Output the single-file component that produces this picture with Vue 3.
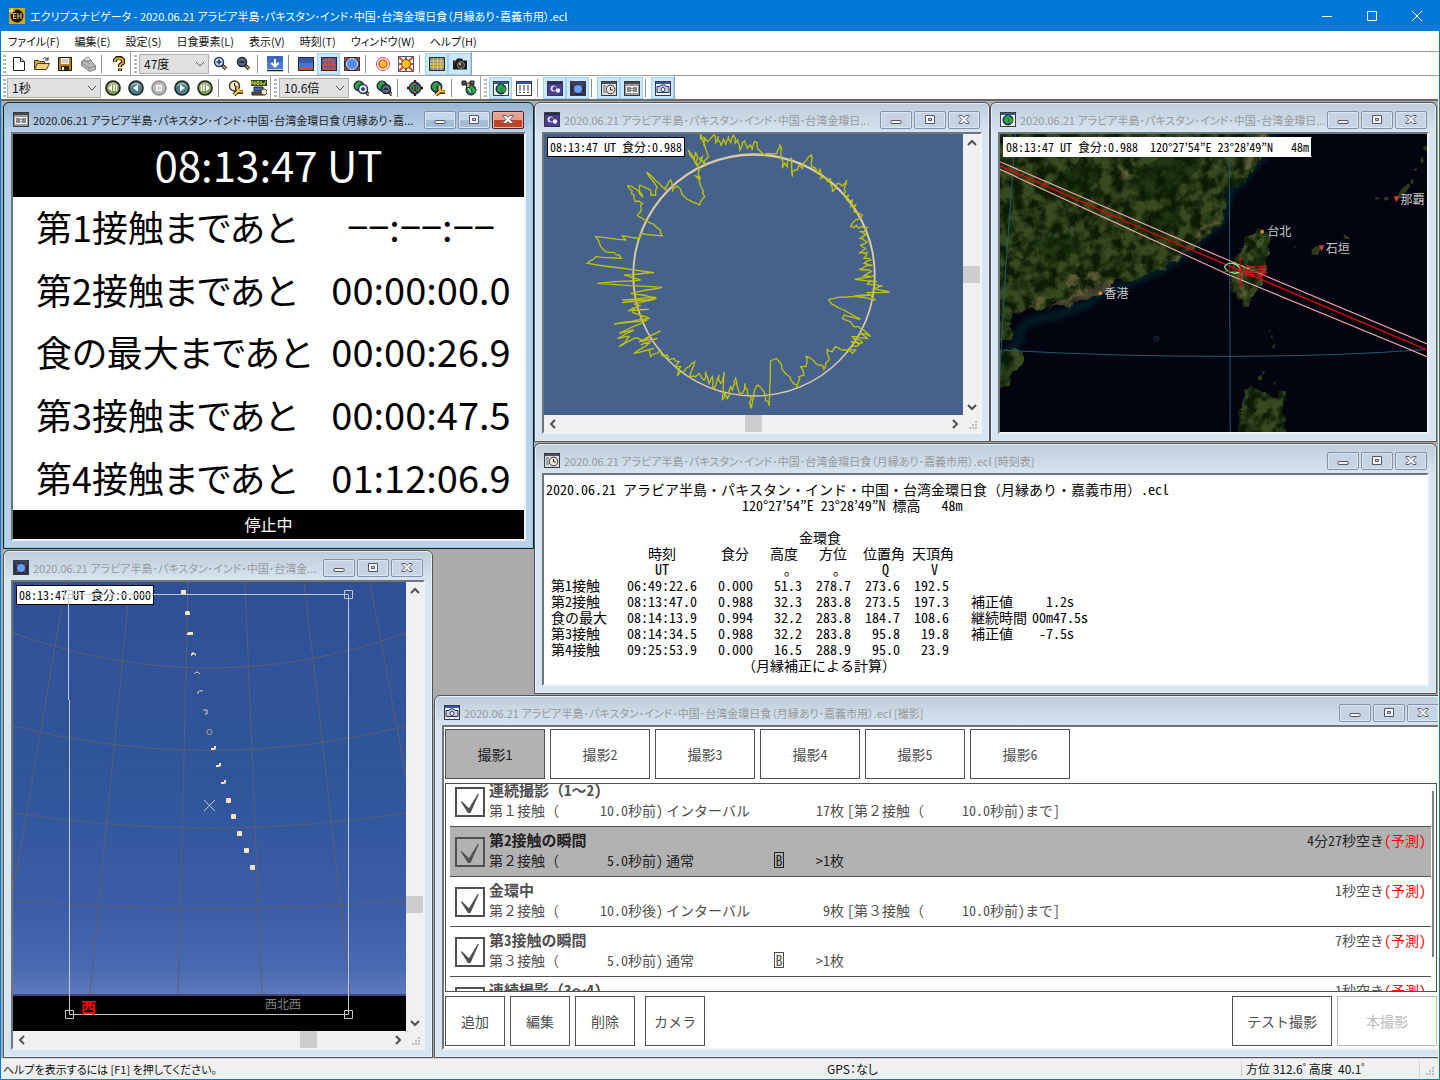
<script setup>
import { ref } from 'vue'

const globe = (x, y, r) =>
  `<circle cx="${x}" cy="${y}" r="${r}" fill="#1d3f86" stroke="#0c1a24"/><path d="M${x - r + 1} ${y - 1}l2-3 3-1 1 2-2 3 1 3-2 1-3-3z" fill="#2fa23a"/><path d="M${x + 1} ${y - 3}l3 1 1 3-2 3-2-2z" fill="#2fa23a"/>`
const frame = (inner, bg = '#fff', bar = '#2f5bb0') =>
  `<rect x=".5" y="1.5" width="15" height="14" fill="${bg}" stroke="#3a3a3a"/><path d="M1 3h14" stroke="${bar}" stroke-width="2"/>${inner}`
const orb = (fill, inner) =>
  `<circle cx="8" cy="8" r="7" fill="${fill}" stroke="#1c2418" stroke-width="1.6"/><path d="M3.500 6a5 4 0 0 1 9 0" stroke="#fff" stroke-opacity=".7" fill="none"/>${inner}`
const lens = (x, y, sign, glass, dark) =>
  `<path d="M${x + 3} ${y + 3}l4 4" stroke="#20242c" stroke-width="3.400"/><path d="M${x + 4} ${y + 4}l3 3" stroke="#d2a048" stroke-width="1.600"/><circle cx="${x}" cy="${y}" r="4.500" fill="${glass}" stroke="${dark}" stroke-width="1.500"/><path d="${sign}" stroke="${dark}" stroke-width="1.600"/>`
const wrench =
  '<path d="M6 15l5-5M9 6v4l2 2h4" stroke="#3c2c08" stroke-width="4" fill="none"/><path d="M6 15l5-5M9.500 6v3.500l2 2h4" stroke="#eabf50" stroke-width="2.200" fill="none"/>'

const icons = {
  app: '<rect width="16" height="16" fill="#d9a414"/><circle cx="8" cy="8" r="6.500" fill="#171208"/><path d="M7.500 5.500h-3v5h3M4.500 8h3M9 5v6M12 5v6M9 8h3" stroke="#e9c95c" fill="none"/><path d="M3 0v6M0 3h6" stroke="#fff8c8"/>',
  fresh: '<path d="M2.500 1.500h7l4 4v9h-11z" fill="#fff" stroke="#222"/><path d="M9.500 1.500v4h4" fill="#ddd" stroke="#222"/>',
  open: '<path d="M.5 13.500v-9h4l1 1h5v2" fill="#d9a441" stroke="#4c3a1a"/><path d="M.5 13.500l3-6h12l-3 6z" fill="#f7cf7c" stroke="#4c3a1a"/><path d="M9 3c2-2 4-1 5 1m0-3v3h-3" fill="none" stroke="#222"/>',
  save: '<path d="M1.500 1.500h13v13h-13z" fill="#b5821e" stroke="#1c1812"/><path d="M4 2h8v6H4z" fill="#f6f2e6"/><path d="M4 10h8v4H4z" fill="#282420"/><path d="M5 11h2v3H5z" fill="#fff"/><path d="M5 4h6M5 6h6" stroke="#aaa"/>',
  print: '<path d="M2 5l6-4 4 4" fill="#e4e4e4" stroke="#8c8c8c"/><path d="M1.500 5.500l9-1 5 5v4l-6 2-8-6z" fill="#b9b9b9" stroke="#858585"/><path d="M2 7l7 5 6-2M4 4l6 4M9 12v3" stroke="#878787" fill="none"/>',
  help: '<path d="M4 6V4l2-2h4l2 2v3l-3 2v2M9 12.500v2.500" stroke="#241a04" stroke-width="4" fill="none"/><path d="M4 6V4l2-1.500h4l2 1.500v3l-3 2v2M9 13v1.500" stroke="#e6ae24" stroke-width="1.800" fill="none"/>',
  zoomIn: lens(6, 6, 'M3.500 6h5M6 3.500v5', '#cfe0fa', '#26365c'),
  zoomOut: lens(6, 6, 'M3.500 6h5', '#5c677c', '#20283a'),
  down: '<rect width="16" height="13" fill="#4a7ed0"/><rect width="16" height="6" fill="#3c68bc"/><path d="M0 14.500h16" stroke="#222" stroke-width="1.500"/><path d="M8 3v7M4.500 7L8 10.500 11.500 7" stroke="#fff" stroke-width="2" fill="none"/>',
  horizon: '<rect x=".5" y="1.500" width="15" height="13" fill="#4a75c8" stroke="#252a38"/><path d="M1 2h14v5H1z" fill="#345cae"/><path d="M1 13h14" stroke="#e84620" stroke-width="2"/>',
  warp: '<rect x=".5" y="1.500" width="15" height="13" fill="#3e62ae" stroke="#252a38"/><path d="M1 13h14M1 9q7-2 14 0M2 5q6-3 12 0M8 2v12M5 3q-2 5-3 11M11 3q2 5 3 11M5 2v12M11 2v12" stroke="#f04a28" fill="none"/>',
  fisheye: '<rect x=".5" y="1.500" width="15" height="13" fill="#394a68" stroke="#252a38"/><circle cx="8" cy="8" r="5.500" fill="#5b8ae0" stroke="#dbe4f4"/><path d="M1 5V2h3M12 2h3v3M15 11v3h-3M4 14H1v-3" stroke="#e84620" fill="none"/>',
  sun: '<circle cx="8" cy="8" r="6.500" fill="#fff" stroke="#e03c3c"/><circle cx="8" cy="8" r="4" fill="#ffc21c" stroke="#e4502c" stroke-width="1.500"/><path d="M6 6l2-1" stroke="#fff"/>',
  rays: '<rect x=".5" y=".5" width="15" height="15" fill="#fff" stroke="#3a5a8a"/><path d="M1 1l14 14M15 1L1 15M8 1v14M1 8h14" stroke="#e44830" stroke-width="2"/><circle cx="8" cy="8" r="4.500" fill="#ffc21c" stroke="#6a3810"/>',
  grid: '<rect x=".5" y="1.500" width="15" height="13" fill="#6088d0" stroke="#262c3a"/><path d="M1 5h14M1 8h14M1 11h14M4.500 2v12M8.500 2v12M12 2v12" stroke="#f0c030" stroke-width="1.400"/>',
  camera: '<path d="M1 4.500h3l1-2h5l1 2h4v9H1z" fill="#1d1c1a"/><circle cx="9" cy="9" r="3.500" fill="#3d3a34" stroke="#8a8478"/><circle cx="8" cy="8" r="1" fill="#ddd"/><path d="M2 6h2" stroke="#a05030"/>',
  rewind: orb('#7f9a52', '<path d="M7 4.500v7L3 8z" fill="#fff"/><path d="M9 5v6M11.500 5v6" stroke="#fff" stroke-width="1.500"/>'),
  back: orb('#4d7d8c', '<path d="M10 4.500v7L5 8z" fill="#fff"/>'),
  stop: '<circle cx="8" cy="8" r="7" fill="#bdb9b9" stroke="#8f8c8c" stroke-width="1.600"/><rect x="5.500" y="5.500" width="5" height="5" fill="#d9d6d6" stroke="#fff"/>',
  play: orb('#4d7d8c', '<path d="M6 4.500v7L11 8z" fill="#fff"/>'),
  forward: orb('#7f9a52', '<path d="M9 4.500v7L13 8z" fill="#fff"/><path d="M4.500 5v6M7 5v6" stroke="#fff" stroke-width="1.500"/>'),
  clockSet: '<circle cx="6.500" cy="6" r="5" fill="#f6eedc" stroke="#4c3614" stroke-width="1.500"/><path d="M6.500 3v3h2" stroke="#333" fill="none"/>' + wrench,
  now: '<path d="M0 0h16v6H0z" fill="#30421c"/><path d="M1 5V1l3 4V1M6 1.500h2v3H6zM10 1v4l1.500-2L13 5l2-4" stroke="#cfe63c" fill="none"/><path d="M3 7h9v4H3z" fill="#3c68bc" stroke="#222"/><path d="M1 12h13v3H1z" fill="#555" stroke="#222"/><circle cx="13" cy="12" r="3" fill="#f4ead0" stroke="#5c4418"/>',
  globeIn: globe(6, 6, 5) + lens(10, 9, 'M8 9h4M10 7v4', '#dfeafa', '#26365c'),
  globeOut: globe(6, 6, 5) + lens(10, 9, 'M8 9h4', '#5c677c', '#20283a'),
  target: globe(8, 8, 6) + '<path d="M8 0v6M8 10v6M0 8h6M10 8h6" stroke="#222" stroke-width="2.400"/><path d="M8 3v2M8 11v2M3 8h2M11 8h2" stroke="#f04a3c" stroke-width="2"/>',
  globeSet: globe(6.5, 7, 5.5) + wrench,
  satellite: globe(10, 10, 5) + '<path d="M1 1h4v4H1zM9 1h4v4H9z" fill="#50555c" stroke="#222"/><path d="M5 3h4v4l-3 1z" fill="#d2ae5a" stroke="#222"/><path d="M7 8l3 4" stroke="#eee"/>',
  map: frame(globe(8, 9, 5), '#f4f4f4'),
  table: frame('<path d="M3 6h2M7 6h2M11 6h2M3 8h2M7 8h2M11 8h2M3 10h2M7 10h2M11 10h2M3 12.500h2M7 12.500h2M11 12.500h2" stroke="#333"/>'),
  limb: frame('<circle cx="6.500" cy="8.500" r="3" fill="#ddd"/><circle cx="7.500" cy="8.500" r="2" fill="#4a3c96"/><circle cx="11" cy="10.500" r="2.200" fill="#f0f0f0"/>', '#4a3c96', '#282c50'),
  sky: frame('<rect x="2" y="4" width="12" height="10" fill="#28304a"/><circle cx="8" cy="9" r="4" fill="#64a0ff"/><path d="M3 5l2 1M13 5l-2 1M3 13l2-1M13 13l-2-1" stroke="#d04828"/>', '#28304a', '#32467c'),
  schedule: frame('<path d="M2 6h3M2 8h2M2 10h2M2 12h3" stroke="#666"/><circle cx="9.500" cy="9.500" r="4.300" fill="#f2e6d6" stroke="#333"/><path d="M9.500 7v3h2.500" stroke="#333" fill="none"/>', '#dcdce0', '#4a5062'),
  digital: frame('<path d="M2 6h12v7H2z" fill="#efefef"/><path d="M4 7v5M6 7v5M8 8v1M8 10v1M10 7v5M12 7v5" stroke="#222"/>', '#9a9a9a', '#4a4a4a'),
  shoot: frame('<path d="M2 6.500h3l1-1.500h4l1 1.500h3v6H2z" fill="#c6cede" stroke="#2a3658"/><circle cx="8" cy="9.500" r="2" fill="#fff" stroke="#2a3658"/>', '#eef2fa')
}

const menus = ['ファイル(F)', '編集(E)', '設定(S)', '日食要素(L)', '表示(V)', '時刻(T)', 'ウィンドウ(W)', 'ヘルプ(H)']

const toolbars = [
  [
    ['fresh', 'open', 'save', 'print', '|', 'help'],
    [{ label: '視野角', value: '47度', size: 'narrow' }, 'zoomIn', 'zoomOut', '|', 'down', '|', 'horizon', '*warp', 'fisheye', '|', 'sun', 'rays', '|', '*grid', '*camera']
  ],
  [
    [{ label: '時間間隔', value: '1秒', size: 'wide' }, 'rewind', 'back', 'stop', 'play', 'forward', '|', 'clockSet', 'now'],
    [{ label: '倍率', value: '10.6倍', size: 'narrow' }, 'globeIn', 'globeOut', '|', 'target', 'globeSet', '|', 'satellite'],
    ['*map', 'table', '|', '*limb', '*sky', '|', '*schedule', '*digital', '|', '*shoot']
  ]
]
const iconOf = (t) => t.replace('*', '')

const windows = [
  { id: 'clock', icon: 'digital', active: true, title: '2020.06.21 アラビア半島･パキスタン･インド･中国･台湾金環日食（月縁あり･嘉...' },
  { id: 'limb', icon: 'limb', v: [115, 115], h: [184, 184], title: '2020.06.21 アラビア半島･パキスタン･インド･中国･台湾金環日...' },
  { id: 'map', icon: 'map', title: '2020.06.21 アラビア半島･パキスタン･インド･中国･台湾金環日...' },
  { id: 'timetable', icon: 'schedule', title: '2020.06.21 アラビア半島･パキスタン･インド･中国･台湾金環日食（月縁あり･嘉義市用）.ecl [時刻表]' },
  { id: 'sky', icon: 'sky', v: [297, 101], h: [270, 72], title: '2020.06.21 アラビア半島･パキスタン･インド･中国･台湾金...' },
  { id: 'shooting', icon: 'shoot', title: '2020.06.21 アラビア半島･パキスタン･インド･中国･台湾金環日食（月縁あり･嘉義市用）.ecl [撮影]' }
]

const countdown = [
  ['第1接触まであと', '−−:−−:−−'],
  ['第2接触まであと', '00:00:00.0'],
  ['食の最大まであと', '00:00:26.9'],
  ['第3接触まであと', '00:00:47.5'],
  ['第4接触まであと', '01:12:06.9']
]

const place = '120°27’54”E 23°28’49”N'
const mapTag = `08:13:47 UT 食分:0.988  ${place}   48m`
const site = `${place} 標高   48m`
const pointing = '方位 312.6ﾟ高度  40.1ﾟ'

const contacts = [
  ['第1接触', '06:49:22.6', '0.000', '51.3', '278.7', '273.6', '192.5', '', ''],
  ['第2接触', '08:13:47.0', '0.988', '32.3', '283.8', '273.5', '197.3', '補正値', '  1.2s'],
  ['食の最大', '08:14:13.9', '0.994', '32.2', '283.8', '184.7', '108.6', '継続時間', '00m47.5s'],
  ['第3接触', '08:14:34.5', '0.988', '32.2', '283.8', '95.8', '19.8', '補正値', ' -7.5s'],
  ['第4接触', '09:25:53.9', '0.000', '16.5', '288.9', '95.0', '23.9', '', '']
]

const tab = ref(0)
const picked = ref(1)
const shots = ref([
  { on: true, name: '連続撮影（1～2)', base: '第１接触（', offset: '10.0秒前)', mode: 'インターバル', count: '17枚', until: '[第２接触（', end: '10.0秒前)まで]' },
  { on: true, name: '第2接触の瞬間', base: '第２接触（', offset: '5.0秒前)', mode: '通常', bulb: true, count: '>1枚', spare: '4分27秒空き' },
  { on: true, name: '金環中', base: '第２接触（', offset: '10.0秒後)', mode: 'インターバル', count: '9枚', until: '[第３接触（', end: '10.0秒前)まで]', spare: '1秒空き' },
  { on: true, name: '第3接触の瞬間', base: '第３接触（', offset: '5.0秒前)', mode: '通常', bulb: true, count: '>1枚', spare: '7秒空き' },
  { on: true, name: '連続撮影（3～4)', spare: '1秒空き' }
])

/* Lunar limb profile, height exaggerated; small relief is added between the survey points. */
const profile = '500,102 512,140 508,110 520,125 540,104 545,128 552,108 560,138 568,118 575,135 583,108 590,128 598,106 603,130 612,118 618,150 625,128 632,122 640,145 648,135 655,150 662,125 670,128 672,148 680,155 690,165 700,160 715,162 728,160 737,133 742,175 745,205 752,190 760,200 763,180 772,175 775,230 782,210 790,210 795,195 805,205 808,190 820,175 832,165 835,200 845,205 850,220 858,208 860,235 870,230 880,245 890,235 895,275 905,262 910,250 925,258 938,240 935,275 928,285 945,285 938,300 955,300 950,320 965,315 960,335 975,340 985,345 978,355 965,360 950,380 985,380 1003,382 980,395 1000,400 978,415 1000,425 980,435 995,445 975,460 1000,455 990,475 1010,480 990,490 1015,495 975,508 1012,515 985,530 1020,528 962,538 1030,545 1000,552 1045,557 1020,566 1066,576 1000,578 1025,600 960,588 1020,584 910,592 884,600 893,612 930,630 980,658 930,645 925,655 950,665 960,680 990,690 1008,708 975,700 1000,715 955,710 985,728 950,725 975,735 945,745 965,750 955,760 940,750 930,750 905,740 895,755 880,748 885,780 875,790 870,808 855,795 845,790 830,775 815,768 815,800 800,800 810,825 795,830 790,865 770,840 750,815 740,790 728,775 710,782 708,850 705,918 695,890 690,875 672,855 662,870 652,925 648,890 640,880 632,850 625,880 615,880 605,835 595,870 590,860 580,898 572,880 565,898 570,815 560,850 555,825 540,868 535,830 525,850 515,815 510,840 495,820 485,830 467,832 482,785 465,800 450,815 430,828 440,800 425,800 435,785 420,775 405,780 400,765 385,768 380,750 370,760 350,770 345,750 360,745 300,760 345,730 320,735 370,715 315,725 380,692 330,720 300,715 255,740 285,710 250,715 300,690 255,700 340,660 240,672 345,655 320,650 295,630 345,628 285,632 320,618 300,612 368,595 265,608 330,600 265,600 365,592 290,580 385,562 190,550 320,540 270,525 360,518 160,490 165,485 185,470 262,475 255,465 215,455 200,440 195,425 185,410 275,420 265,408 315,415 320,400 385,408 380,390 350,370 325,355 310,345 320,335 325,310 305,305 300,285 282,257 310,270 325,290 318,255 345,268 350,285 365,285 370,262 338,216 375,250 395,270 410,240 415,275 430,258 450,288 470,302 497,315 512,290 500,258 485,228 500,238 492,200 478,175 462,150 480,180 484,155 492,195 505,170 508,195 522,165 500,102'
const limbPath = (() => {
  let seed = 7
  const rnd = (a) => ((seed = (seed * 16807) % 2147483647) / 2147483647 - 0.5) * a
  const pts = profile.split(' ').map((p) => p.split(',').map(Number))
  const out = [pts[0].join(' ')]
  for (let i = 1; i < pts.length; i++) {
    const [ax, ay] = pts[i - 1]
    const [bx, by] = pts[i]
    const len = Math.hypot(bx - ax, by - ay)
    const n = Math.min(4, Math.floor(len / 8))
    const relief = len > 45 ? 2 : 9
    for (let k = 1; k < n; k++) {
      out.push(`${Math.round(ax + ((bx - ax) * k) / n + rnd(relief))} ${Math.round(ay + ((by - ay) * k) / n + rnd(relief))}`)
    }
    out.push(`${bx} ${by}`)
  }
  return 'M' + out.join('L')
})()

/* Solar track: full disc, waning crescent, ring, waxing crescent, full disc. */
const suns = [
  'M181 590h5v4h-5z', 'M185 615v-3l1-1h3l1 2v2z', 'M187 635v-2l2-1h4v3h-4z', 'M191 656v-2l2-2 3 2v2l-2-2z'
]
const crescents = ['M194 674q3-4 6 0', 'M198 694v-2q1-2 5-1', 'M203 710h4v4h-2']
const rises = [[213, 748], [218, 765], [223, 782]]
const discs = [[228, 800], [233, 816], [239, 833], [246, 850], [252, 867]]
</script>

<template>
  <div class="app">
    <header class="titlebar">
      <svg class="app-icon" viewBox="0 0 16 16" v-html="icons.app"></svg>
      <h1>エクリプスナビゲータ - 2020.06.21 アラビア半島･パキスタン･インド･中国･台湾金環日食（月縁あり･嘉義市用）.ecl</h1>
      <div class="sys">
        <button aria-label="最小化"><svg viewBox="0 0 10 10"><path d="M0 5.500h10" /></svg></button>
        <button aria-label="最大化"><svg viewBox="0 0 10 10"><path d="M.5.500h9v9h-9z" /></svg></button>
        <button aria-label="閉じる"><svg viewBox="0 0 10 10"><path d="M0 0l10 10M10 0L0 10" /></svg></button>
      </div>
    </header>

    <nav class="menubar">
      <button v-for="m in menus" :key="m">{{ m }}</button>
    </nav>

    <div v-for="(row, r) in toolbars" :key="r" class="toolrow">
      <div v-for="(group, g) in row" :key="g" class="toolgroup">
        <span class="grip"></span>
        <template v-for="(t, i) in group" :key="i">
          <span v-if="t === '|'" class="sep"></span>
          <label v-else-if="t.label" class="combo" :class="t.size">
            <select :aria-label="t.label"><option>{{ t.value }}</option></select>
            <svg viewBox="0 0 10 6"><path d="M1 1l4 4 4-4" /></svg>
          </label>
          <button v-else class="tool" :class="{ on: t[0] === '*' }" :aria-label="iconOf(t)">
            <svg viewBox="0 0 16 16" v-html="icons[iconOf(t)]"></svg>
          </button>
        </template>
      </div>
    </div>

    <main class="workspace">
      <section v-for="w in windows" :key="w.id" class="window" :class="['w-' + w.id, { active: w.active }]">
        <header class="caption">
          <svg class="win-icon" viewBox="0 0 16 16" v-html="icons[w.icon]"></svg>
          <h2>{{ w.title }}</h2>
          <div class="caption-buttons">
            <button aria-label="最小化"><svg viewBox="0 0 12 10"><rect x="1" y="5.500" width="10" height="3" rx=".5" /></svg></button>
            <button aria-label="元に戻す"><svg viewBox="0 0 12 10"><path d="M1.500.500h9v8h-9zM4.500 3.500h3v2h-3z" fill-rule="evenodd" /></svg></button>
            <button class="close" aria-label="閉じる"><svg viewBox="0 0 12 10"><path d="M1 .5h3l2 2 2-2h3v1L8 4.500l3 3v1H8l-2-2-2 2H1v-1l3-3-3-3z" /></svg></button>
          </div>
        </header>

        <div class="client" :class="{ scrolls: w.v }">
          <div v-if="w.id === 'clock'" class="clock">
            <p class="now">08:13:47 UT</p>
            <dl>
              <div v-for="c in countdown" :key="c[0]"><dt>{{ c[0] }}</dt><dd>{{ c[1] }}</dd></div>
            </dl>
            <p class="state">停止中</p>
          </div>

          <div v-else-if="w.id === 'limb'" class="canvas">
            <svg viewBox="30 102 1257 843" preserveAspectRatio="xMidYMid slice">
              <rect x="30" y="102" width="1257" height="843" fill="#46628b" />
              <path d="M660 160a365 365 0 1 1 0 730a365 365 0 1 1 0-730zM660 167a359.500 359.500 0 1 0 0 719a359.500 359.500 0 1 0 0-719z" fill="#dccaa6" fill-rule="evenodd" />
              <path :d="limbPath" fill="none" stroke="#bfc20a" stroke-width="4" />
            </svg>
            <span class="tag">08:13:47 UT 食分:0.988</span>
          </div>

          <div v-else-if="w.id === 'map'" class="canvas">
            <svg viewBox="30 102 1282 894" preserveAspectRatio="xMidYMid slice">
              <defs>
                <filter id="terrain" x="0" y="0" width="100%" height="100%" color-interpolation-filters="sRGB">
                  <feTurbulence type="fractalNoise" baseFrequency="0.03" numOctaves="6" seed="4" result="noise" />
                  <feDisplacementMap in="SourceGraphic" in2="noise" scale="34" xChannelSelector="R" yChannelSelector="G" result="land" />
                  <feColorMatrix in="noise" values="0 0 0 0 .05  0 0 0 0 .11  0 0 0 0 .02  3.200 0 0 0 -1.150" />
                  <feComposite in2="land" operator="in" result="shade" />
                  <feMerge><feMergeNode in="land" /><feMergeNode in="shade" /></feMerge>
                </filter>
                <filter id="soft"><feGaussianBlur stdDeviation="9" /></filter>
              </defs>
              <rect x="30" y="102" width="1282" height="894" fill="#02040f" />
              <path d="M852 102l-17 48-35 40-40 50-40 30-10 40-10 40-10 25-40 25-30 25-30 35-80 50-60 25-50 25-70 15-30 35-95 35-90 20-25 30v25l-35 35" fill="none" stroke="#062329" stroke-width="22" filter="url(#soft)" />
              <g filter="url(#terrain)">
                <path d="M0 70H866l-14 32-8 30-14 26-18 12-12 24-22 22-10 26-30 14-18 14-12 20 4 24-14 20 4 22-12 24-18 4-10 16-30 12-22 30-22 8-10 16-28 14-20 18-34 12-24 16-44 10-12 10-34-4-30 14-8-6-30 14-16-4-12 20-28 4-14 20-56 6-40 16-52 2-26 14-12 30 12 22-6 20-26 12H0z" fill="#374a20" />
                <path d="M0 745l64 4 36 8v24l-14 22-20 18-10 26-26 16H0z" fill="#374a20" />
                <path d="M815 386l16 10 12 28-6 36-16 62-20 50-20 28-6 28-10-8-8-24-22-14-12-40 4-44 20-38 20-36 26-28z" fill="#43562a" />
                <path d="M764 870l36-4 30 16 38 10 6-18 8 4-2 38 8 40 6 90H748l2-126z" fill="#374a20" />
                <g fill="#766844" opacity=".6">
                  <path d="M852 102l-40 66-50 50-10-20 30-50 26-46zM700 340l-30 50-60 50-40 40-30 10 40-60 60-50zM220 530l50-20 60 10 40 30-20 24-60 20-50 20-60 10 60-40zM370 210l30-10 10 30-20 40-20-20zM740 540l8 44 18 20-4-30-12-60 10-60 30-60-20 20-24 60zM80 640l40-40 60-10-60 40z" />
                </g>
                <g fill="#142a0a" opacity=".6">
                  <path d="M180 260l90-80 60 20-30 70-80 50zM440 210l110-70 90-10-20 90-110 80-70 10zM120 430l110-30 60 40-110 40zM430 370l120-60 30 60-80 60zM830 400l8 30-16 70-24 50-6-60 20-60z" />
                </g>
              </g>
              <g fill="#2c3b1c">
                <path d="M1222 290l12-22 22-18 6 8-20 26-12 14zM1262 240l8-4 2 14-10 2zM1270 208l12-4-4 10zM1290 180l8-12 4 18-8 4zM1298 145l12-10 2 20zM1156 292h12v6h-12zM1182 292l12-2 4 8-14 4zM964 450l16-12 14 6-10 22-16-2zM1022 444l10-4v6zM1060 402l12 6 10 10-18-2zM912 438h8v4h-8zM842 710l6-8v14zM846 740l10-10-4 16zM804 830l10-6 4 14-12 4zM816 814l10 2-6 8zM850 850l8-8-2 14zM838 690h4v6h-4z" />
              </g>
              <circle cx="500" cy="716" r="7" fill="#0a151c" stroke="#123038" stroke-width="3" />
              <g fill="none" stroke="#205a70" stroke-width="3">
                <path d="M718 102q2 440 3 894M77 102L48 500q-12 200-18 330M30 750q350 20 690 19t592-21" />
              </g>
              <g fill="none" stroke-width="3.500">
                <path d="M30 185L730 487L1312 732M30 208L720 526L1312 770" stroke="#f0a8a8" />
                <path d="M30 197L500 405L750 511L1312 750" stroke="#e80008" stroke-width="4" />
                <path d="M704 500q8-14 28-9 18 6 20 22-8 8-22 6-22-4-26-19z" stroke="#90ff80" />
                <path d="M751 470v93M704 514h96" stroke="#e80008" />
              </g>
              <circle cx="817" cy="395" r="6" fill="#d08030" /><circle cx="332" cy="580" r="6" fill="#d08030" />
              <path d="M1211 289h18l-9 18zM986 436h18l-9 18z" fill="#d03838" />
              <g class="places">
                <text x="832" y="408">台北</text><text x="344" y="594">香港</text>
                <text x="1008" y="458">石垣</text><text x="1232" y="312">那覇</text>
                <text x="762" y="528" class="here">嘉義</text>
              </g>
            </svg>
            <span class="tag plain">{{ mapTag }}</span>
          </div>

          <div v-else-if="w.id === 'timetable'" class="report">
            <p>2020.06.21 アラビア半島・パキスタン・インド・中国・台湾金環日食（月縁あり・嘉義市用）.ecl</p>
            <p class="site">{{ site }}</p>
            <table>
              <caption>金環食</caption>
              <colgroup><col class="c-name" /><col class="c-time" /><col class="c-mag" /><col v-for="n in 4" :key="n" class="c-num" /><col class="c-note" /><col class="c-fix" /></colgroup>
              <thead>
                <tr><th></th><th class="mid">時刻</th><th>食分</th><th>高度</th><th>方位</th><th class="angle">位置角</th><th class="angle">天頂角</th><th></th><th></th></tr>
                <tr><th></th><th class="mid">UT</th><th></th><th class="deg">｡</th><th class="deg">｡</th><th class="deg">Q</th><th class="deg">V</th><th></th><th></th></tr>
              </thead>
              <tbody>
                <tr v-for="c in contacts" :key="c[0]"><td v-for="(v, i) in c" :key="i">{{ v }}</td></tr>
              </tbody>
            </table>
            <p class="remark">（月縁補正による計算）</p>
          </div>

          <div v-else-if="w.id === 'sky'" class="canvas">
            <svg viewBox="13 582 393 449" preserveAspectRatio="xMidYMid slice">
              <defs>
                <linearGradient id="dusk" x1="0" y1="0" x2="0" y2="1">
                  <stop offset="0" stop-color="#2f5096" /><stop offset=".5" stop-color="#30559b" /><stop offset=".8" stop-color="#3c5ea8" /><stop offset=".94" stop-color="#4a6ab2" /><stop offset="1" stop-color="#607abc" />
                </linearGradient>
              </defs>
              <rect x="13" y="582" width="393" height="413" fill="url(#dusk)" />
              <g fill="none" stroke="#5c6070">
                <path d="M66 582L28 805 13 893M130 582l-21 218-19 194M188 582l-5 218-5 194M245 582l9 218 8 194M304 582l25 218 21 194M370 582l36 194" />
                <path d="M13 633q197 70 393 0M13 726q197 49 393 0M13 813q197 30 393 0M13 901q197 15 393 0" />
              </g>
              <rect x="13" y="994" width="393" height="2" fill="#46447c" />
              <rect x="13" y="996" width="393" height="35" fill="#000" />
              <path v-for="s in suns" :key="s" :d="s" fill="#fbe6bc" />
              <g fill="none" stroke="#e6d2a4">
                <path v-for="s in crescents" :key="s" :d="s" />
                <circle cx="209.500" cy="732" r="2.500" stroke="#b8a880" />
              </g>
              <path v-for="s in rises" :key="s[0]" :d="`M${s[0] - 2} ${s[1]}h3v-2h2v3l-2 1h-3z`" fill="#fbe6bc" />
              <rect v-for="s in discs" :key="s[0]" :x="s[0] - 2" :y="s[1] - 2" width="5" height="5" rx="1" fill="#fbe6bc" />
            </svg>
            <span class="tag">08:13:47 UT 食分:0.000</span>
            <svg class="overlay" viewBox="13 582 393 449" preserveAspectRatio="xMidYMid slice">
              <g fill="none" stroke="#c4c8cc">
                <path d="M68.500 700V594.500h280v420h-279V700" />
                <path d="M64.500 590.500h8v8h-8zM344.500 590.500h8v8h-8zM65.500 1010.500h8v8h-8zM344.500 1010.500h8v8h-8z" />
                <path d="M204 800l11 11M215 800l-11 11" />
              </g>
              <text x="81" y="1013" class="west">西</text>
              <text x="265" y="1009" class="wnw">西北西</text>
            </svg>
          </div>

          <form v-else class="shooting" @submit.prevent>
            <div class="tabs">
              <button v-for="n in 6" :key="n" type="button" :class="{ on: tab === n - 1 }" @click="tab = n - 1">撮影{{ n }}</button>
            </div>
            <div class="list">
              <ul>
                <li v-for="(s, i) in shots" :key="i" :class="{ on: picked === i }" @click="picked = i">
                  <input :id="'shot' + i" v-model="s.on" type="checkbox" />
                  <div class="shot">
                    <div class="line"><label :for="'shot' + i">{{ s.name }}</label><span v-if="s.spare">{{ s.spare }}<em>(予測)</em></span></div>
                    <div v-if="s.base" class="detail">
                      <span>{{ s.base }}</span><span class="r">{{ s.offset }}</span><span class="mode">{{ s.mode }}</span>
                      <span><b v-if="s.bulb">B</b></span><span class="r">{{ s.count }}</span>
                      <span class="until">{{ s.until }}</span><span class="r">{{ s.end }}</span>
                    </div>
                  </div>
                </li>
              </ul>
              <span class="mark"></span>
            </div>
            <div class="actions">
              <button type="button">追加</button><button type="button">編集</button><button type="button">削除</button>
              <button type="button" class="apart">カメラ</button>
              <button type="button" class="wide test">テスト撮影</button><button type="button" class="wide" disabled>本撮影</button>
            </div>
          </form>

          <template v-if="w.v">
            <div class="bar vertical">
              <button aria-label="上へ"><svg viewBox="0 0 10 10"><path d="M1 7l4-4 4 4" /></svg></button>
              <i :style="{ flexGrow: w.v[0] }"></i><span class="thumb"></span><i :style="{ flexGrow: w.v[1] }"></i>
              <button aria-label="下へ"><svg viewBox="0 0 10 10"><path d="M1 3l4 4 4-4" /></svg></button>
            </div>
            <div class="bar">
              <button aria-label="左へ"><svg viewBox="0 0 10 10"><path d="M7 1L3 5l4 4" /></svg></button>
              <i :style="{ flexGrow: w.h[0] }"></i><span class="thumb"></span><i :style="{ flexGrow: w.h[1] }"></i>
              <button aria-label="右へ"><svg viewBox="0 0 10 10"><path d="M3 1l4 4-4 4" /></svg></button>
            </div>
            <svg class="size-grip" viewBox="0 0 17 17"><path d="M12 6h2v2h-2zM9 9h2v2H9zM12 9h2v2h-2zM6 12h2v2H6zM9 12h2v2H9zM12 12h2v2h-2z" /></svg>
          </template>
        </div>
      </section>
    </main>

    <footer class="statusbar">
      <span class="hint">ヘルプを表示するには [F1] を押してください。</span>
      <span class="gps">GPS：なし</span>
      <span class="pointing">{{ pointing }}</span>
      <svg class="size-grip" viewBox="0 0 17 17"><path d="M12 6h2v2h-2zM9 9h2v2H9zM12 9h2v2h-2zM6 12h2v2H6zM9 12h2v2H9zM12 12h2v2h-2z" /></svg>
    </footer>
  </div>
</template>

<style>
html,
body {
  margin: 0;
  background: #f0f0f0;
}
</style>

<style scoped>
.app {
  --mono: 'Noto Sans Mono CJK JP', 'Noto Sans CJK JP', monospace;
  box-sizing: border-box;
  display: flex;
  flex-direction: column;
  min-width: 1080px;
  height: 100vh;
  min-height: 900px;
  border: 1px solid #0078d7;
  border-top: 0;
  background: #fff;
  color: #111;
  font: 12px/16px 'Noto Sans CJK JP', sans-serif;
  font-feature-settings: 'palt';
  overflow: hidden;
}
.app * { box-sizing: border-box; }
button, select, input { margin: 0; padding: 0; font: inherit; font-feature-settings: inherit; color: inherit; border: 0; background: none; border-radius: 0; }
h1, h2, p, dl, dd, ul { margin: 0; padding: 0; font-weight: 400; }
button { display: flex; align-items: center; justify-content: center; }

.titlebar { display: flex; align-items: center; flex: none; height: 31px; padding-left: 8px; background: #0078d7; color: #fff; }
.app-icon { width: 16px; height: 16px; margin-right: 5px; }
h1 { flex: 1; font-size: 11px; white-space: nowrap; overflow: hidden; }
.sys { display: flex; height: 31px; }
.sys button { width: 45px; }
.sys svg { width: 10px; height: 10px; fill: none; stroke: #fff; }

.menubar { display: flex; flex: none; height: 20px; font-size: 11px; }
.menubar button { padding: 0 8px 0 7px; white-space: nowrap; }

.toolrow { display: flex; flex: none; height: 24px; border-top: 1px solid #a0a0a0; }
.toolgroup { display: flex; align-items: center; border-right: 1px solid #a0a0a0; }
.grip { width: 3px; height: 18px; margin: 0 1px 0 2px; background: repeating-linear-gradient(#b4b4b4 0 2px, #fff 2px 4px); }
.toolgroup:not(:first-child) .grip { margin: 0 2px 0 3px; }
.tool { width: 23px; height: 22px; }
.tool svg { width: 16px; height: 16px; }
.tool.on { background: #cce8ff; border: 1px solid #99d1ff; }
.sep { width: 1px; height: 18px; margin: 0 5px 0 2px; background: #8c8c8c; }
.combo { position: relative; height: 20px; }
.combo.narrow { width: 70px; }
.combo.wide { width: 94px; }
.combo select { appearance: none; width: 100%; height: 20px; padding: 0 4px; border: 1px solid #adadad; background: #e1e1e1; }
.combo svg { position: absolute; right: 4px; top: 7px; width: 10px; height: 6px; fill: none; stroke: #555; }

.workspace { position: relative; flex: 1; min-height: 0; margin-right: 1px; overflow: hidden; background: #ababab; border-top: 2px solid #696969; }

.window { position: absolute; display: flex; flex-direction: column; padding: 0 7px 7px; border: 1px solid #50545a; border-radius: 6px 6px 0 0; background: linear-gradient(#bfcddb, #d7e4f2 30px); box-shadow: inset 0 0 0 1px #e8f1fa; color: #999; }
.window.active { background: linear-gradient(#9ab6d3, #b9d1ea 30px); border-color: #222; box-shadow: inset 0 0 0 1px #7fd4ea; color: #222; }
.w-clock { left: 2px; top: 1px; width: 531px; height: 447px; }
.w-limb { left: 533px; top: 1px; width: 456px; height: 340px; }
.w-map { left: 989px; top: 1px; width: 447px; height: 340px; }
.w-timetable { left: 533px; right: 1px; top: 342px; height: 251px; }
.w-sky { left: 2px; top: 449px; bottom: 0; width: 430px; }
.w-shooting { left: 433px; right: -11px; top: 594px; bottom: 0; }

.caption { display: flex; flex: none; height: 29px; padding: 8px 2px 0; }
.win-icon { flex: none; width: 16px; height: 16px; margin: 0 4px 0 0; }
h2 { flex: 1; min-width: 0; font-size: 11px; line-height: 18px; white-space: nowrap; overflow: hidden; }
.caption-buttons { display: flex; gap: 2px; }
.caption-buttons button { width: 32px; height: 18px; border: 1px solid #8591aa; border-radius: 2px; background: #c5d3e4; box-shadow: inset 0 0 0 1px #dde7f2; }
.caption-buttons svg { width: 12px; height: 10px; fill: #fafafa; stroke: #535666; }
.active .caption-buttons button { background: linear-gradient(#c4d6ea 50%, #a4bcd6 50%); }
.active .caption-buttons .close { background: linear-gradient(#e3a08e 50%, #bf4428 50%); border-color: #571f28; box-shadow: inset 0 0 0 1px #eab8aa; }

.client { flex: 1; min-height: 0; display: grid; grid-template: minmax(0, 1fr) / minmax(0, 1fr); border: 2px solid; border-color: #70757c #f0f4f8 #f0f4f8 #70757c; background: #fff; }
.client.scrolls { grid-template: minmax(0, 1fr) 17px / minmax(0, 1fr) 17px; background: #f0f0f0; }
.canvas { position: relative; overflow: hidden; min-height: 0; }
.canvas svg { display: block; width: 100%; height: 100%; }
.canvas .overlay { position: absolute; inset: 0; }
.tag { position: absolute; left: 3px; top: 3px; height: 20px; padding: 0 2px; border: 1px solid #000; background: #fff; color: #000; font: 12px/18px var(--mono); font-feature-settings: normal; white-space: pre; }
.tag.plain { border-color: #fff #000 #fff #fff; }
.places { font-size: 36px; fill: #c8c8c8; font-feature-settings: normal; }
.here { fill: #c82020; }
.west { font-size: 15px; font-weight: 700; fill: #f00; }
.wnw { font-size: 12px; fill: #808080; }

.bar { display: flex; background: #f0f0f0; }
.bar.vertical { flex-direction: column; }
.bar button, .thumb { flex: none; width: 17px; height: 17px; }
.bar svg { width: 10px; height: 10px; fill: none; stroke: #505050; stroke-width: 2; }
.thumb { background: #cdcdcd; }
.size-grip { width: 17px; height: 17px; fill: #bfbfbf; }

.clock { display: flex; flex-direction: column; color: #000; }
.now { flex: none; height: 63px; background: #000; color: #fff; font-size: 42px; line-height: 60px; text-align: center; }
.clock dl { flex: 1; display: flex; flex-direction: column; line-height: 48px; }
.clock dl div { flex: 1; display: flex; align-items: center; padding: 0 0 4px 23px; white-space: nowrap; }
.clock dt { flex: 1; font-size: 36px; }
.clock dd { width: 206px; font-size: 38px; text-align: center; }
.state { flex: none; height: 29px; background: #000; color: #fff; font-size: 16px; line-height: 29px; text-align: center; }

.report { padding: 6px 2px 0; color: #000; font: 14px/16px var(--mono); font-feature-settings: normal; white-space: pre; overflow: hidden; }
.site { padding-left: 196px; }
table { width: 537px; margin: 16px 0 0 5px; border-collapse: collapse; table-layout: fixed; }
caption { height: 16px; text-align: left; padding-left: 248px; }
td, th { height: 16px; padding: 0; font-weight: 400; text-align: right; }
td:first-child, td:last-child { text-align: left; }
td:nth-child(8) { text-align: left; padding-left: 22px; }
th { padding-right: 4px; }
th.mid { text-align: center; padding: 0; }
th.angle { text-align: left; padding: 0 0 0 12px; }
th.deg { padding-right: 11px; }
.c-name { width: 76px; }
.c-time { width: 70px; }
.c-mag, .c-fix { width: 56px; }
.c-num { width: 49px; }
.c-note { width: 83px; }
.remark { padding-left: 196px; }

.shooting { display: flex; flex-direction: column; min-width: 0; min-height: 0; padding: 2px 2px 2px 1px; color: #505050; font: 14px/20px var(--mono); font-feature-settings: normal; }
.tabs { display: flex; gap: 5px; flex: none; height: 50px; }
.tabs button, .actions button { width: 100px; height: 50px; border: 1px solid #505050; background: #fff; }
.tabs .on { background: #b2b2b2; color: #222; }
.list { flex: 1; min-height: 0; display: flex; align-items: flex-start; margin: 4px 0; border: 1px solid #505050; overflow: hidden; }
ul { flex: 1; margin: -7px 0 0 4px; list-style: none; }
li { display: flex; height: 50px; padding: 10px 5px 0; border-bottom: 1px solid #505050; }
li.on { background: #b2b2b2; color: #222; }
li input { appearance: none; flex: none; width: 30px; height: 30px; margin-right: 4px; border: 2px solid #505050; }
li input::before { content: ''; display: block; width: 26px; height: 26px; background: #505050; clip-path: polygon(14% 48%, 20% 48%, 46% 74%, 80% 18%, 84% 20%, 52% 92%, 42% 92%); }
li input:not(:checked)::before { display: none; }
.shot { flex: 1; margin-top: -7px; white-space: nowrap; }
.line { display: flex; justify-content: space-between; }
.line label { font-size: 15px; font-weight: 700; }
em { font-style: normal; color: #f00; }
.detail { display: grid; grid-template-columns: 70px 104px 111px 41px 29px 79px 137px; }
.mode, .until { padding-left: 3px; }
.r { text-align: right; }
.detail b { display: inline-block; width: 10px; height: 16px; border: 1px solid currentColor; font-weight: 400; line-height: 14px; text-align: center; }
.mark { width: 2px; height: 166px; margin: 7px 2px 0 1px; background: #808080; }
.actions { display: flex; gap: 5px; flex: none; }
.actions button { width: 60px; }
.actions .apart { margin-left: 5px; }
.actions .wide { width: 100px; }
.actions .test { margin-left: auto; }
.actions button:disabled { border-color: #bbb; color: #bbb; }

.statusbar { display: flex; align-items: center; flex: none; height: 21px; padding-left: 2px; border-top: 1px solid #d7d7d7; background: #f0f0f0; white-space: pre; }
.hint { flex: 1; font-size: 11px; }
.gps { width: 414px; }
.pointing { width: 179px; padding-left: 4px; border-left: 1px solid #d0d0d0; border-right: 1px solid #d0d0d0; }
.statusbar .size-grip { margin-right: 2px; }
</style>
